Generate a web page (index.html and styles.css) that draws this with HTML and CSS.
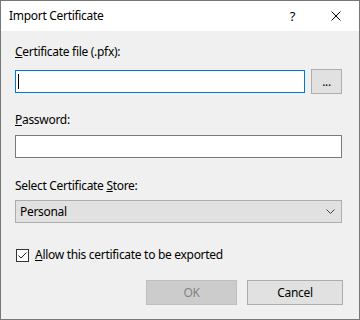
FILE: index.html
```html
<!DOCTYPE html>
<html lang="en">
<head>
  <meta charset="UTF-8" />
  <meta name="viewport" content="width=device-width, initial-scale=1.0"/>
  <title>Import Certificate</title>
  <link rel="stylesheet" href="styles.css">
</head>
<body>

  <div class="dialog">
    <!-- title bar -->
    <div class="titlebar">
      <span class="title">Import Certificate</span>
      <span class="help">?</span>
      <span class="close">
        <svg width="10" height="10" viewBox="0 0 10 10">
          <path d="M0.5 0.5 L9.5 9.5 M9.5 0.5 L0.5 9.5" stroke="#000" stroke-width="1" fill="none"/>
        </svg>
      </span>
    </div>

    <div class="content">
      <label class="label first"><u>C</u>ertificate file (.pfx):</label>
      <div class="file-row">
        <div class="input focused"><span class="caret"></span></div>
        <button class="btn browse">...</button>
      </div>

      <label class="label pass"><u>P</u>assword:</label>
      <div class="input"></div>

      <label class="label store">Select Certificate <u>S</u>tore:</label>
      <div class="select">
        <span>Personal</span>
        <svg width="9" height="5" viewBox="0 0 9 5">
          <path d="M0.5 0.5 L4.5 4.5 L8.5 0.5" stroke="#444" stroke-width="1" fill="none"/>
        </svg>
      </div>

      <div class="check-row">
        <span class="checkbox">
          <svg width="11" height="11" viewBox="0 0 11 11">
            <path d="M1.5 5.5 L4 8 L9.5 2.5" stroke="#222" stroke-width="1" fill="none"/>
          </svg>
        </span>
        <span><u>A</u>llow this certificate to be exported</span>
      </div>

      <div class="actions">
        <button class="btn ok" disabled>OK</button>
        <button class="btn cancel">Cancel</button>
      </div>
    </div>
  </div>

</body>
</html>
```

FILE: styles.css
```css
* {
  box-sizing: border-box;
}

body {
  margin: 0;
  padding: 0;
  font-family: "Noto Sans", "Liberation Sans", sans-serif;
  font-size: 12px;
  line-height: 16px;
  letter-spacing: -0.3px;
  color: #000;
}

.dialog {
  width: 360px;
  height: 320px;
  border: 1px solid #777;
  background: #f0f0f0;
  display: flex;
  flex-direction: column;
}

.titlebar {
  height: 30px;
  background: #fff;
  display: flex;
  align-items: center;
  padding-left: 8px;
}

.title {
  flex: 1;
}

.help {
  font-size: 13px;
  margin-right: 26px;
}

.close {
  width: 30px;
  display: flex;
  justify-content: center;
  margin-right: 8px;
}

.content {
  display: flex;
  flex-direction: column;
  padding: 0 16px 0 14px;
}

.label {
  display: block;
}

.label.first {
  margin-top: 13px;
}

.label.pass {
  margin-top: 18px;
  margin-bottom: 7px;
}

.label.store {
  margin-top: 20px;
  margin-bottom: 6px;
}

.file-row {
  display: flex;
  align-items: center;
  margin-top: 9px;
  height: 25px;
}

.input {
  height: 23px;
  background: #fff;
  border: 1px solid #7a7a7a;
  width: 327px;
}

.input.focused {
  width: 290px;
  border-color: #0078d7;
  padding: 3px 2px;
}

.caret {
  display: block;
  width: 1px;
  height: 15px;
  background: #000;
}

.btn {
  font-family: inherit;
  font-size: 12px;
  letter-spacing: inherit;
  background: #e1e1e1;
  border: 1px solid #adadad;
  color: #000;
  padding: 0;
  height: 25px;
}

.browse {
  width: 31px;
  margin-left: 6px;
  line-height: 14px;
}

.select {
  width: 327px;
  height: 23px;
  background: #e1e1e1;
  border: 1px solid #adadad;
  display: flex;
  align-items: center;
  justify-content: space-between;
  padding: 0 6px 0 4px;
}

.check-row {
  display: flex;
  align-items: center;
  gap: 6px;
  margin-top: 24px;
  height: 16px;
  padding-left: 1px;
}

.checkbox {
  width: 13px;
  height: 13px;
  border: 1px solid #333;
  background: #fff;
  display: flex;
}

.actions {
  display: flex;
  justify-content: flex-end;
  gap: 10px;
  margin-top: 17px;
}

.ok {
  width: 91px;
  background: #cccccc;
  border-color: #bfbfbf;
  color: #838383;
}

.cancel {
  width: 96px;
}
```
